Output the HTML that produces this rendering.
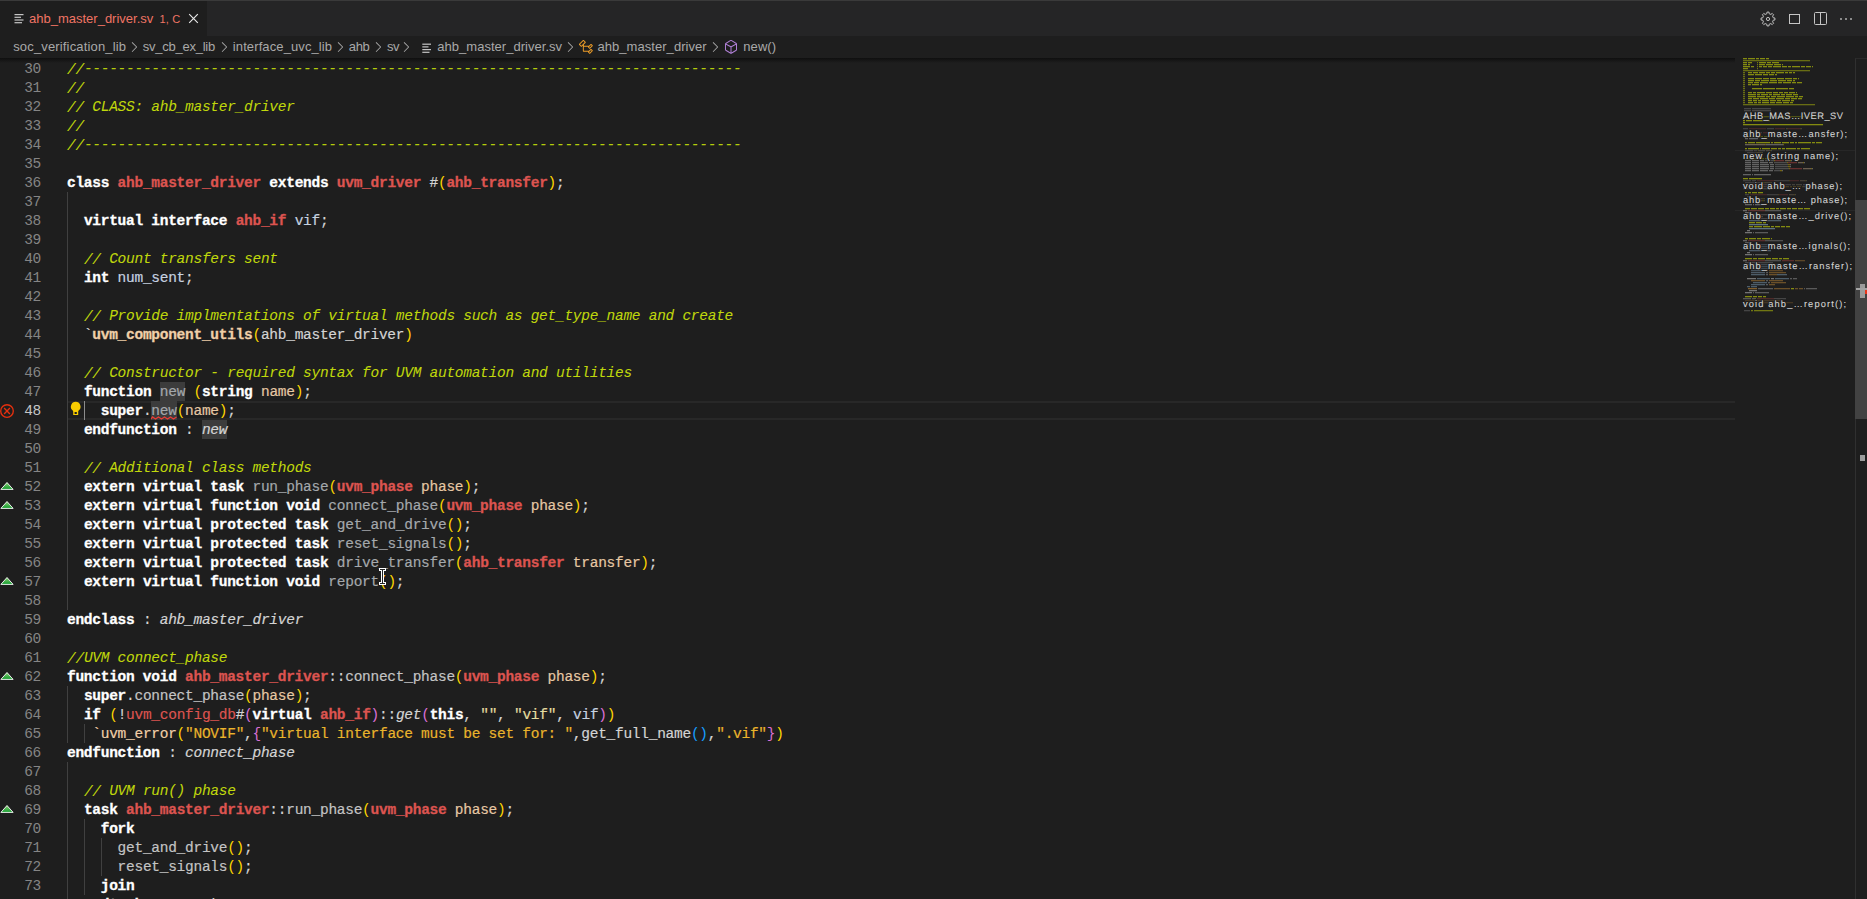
<!DOCTYPE html>
<html><head><meta charset="utf-8"><title>ahb_master_driver.sv</title>
<style>
*{box-sizing:border-box;margin:0;padding:0}
html,body{width:1867px;height:899px;overflow:hidden;background:#1e1e1e}
body{position:relative;font-family:"Liberation Sans",sans-serif;color:#d4d4d4}
.abs{position:absolute}
/* tab bar */
#tabs{position:absolute;left:0;top:0;width:1867px;height:36px;background:#252526}
#topline{position:absolute;left:0;top:0;width:1867px;height:1px;background:#3a3a3a}
#tab{position:absolute;left:0;top:1px;width:207px;height:35px;background:#1e1e1e}
#tab .lbl{position:absolute;left:29px;top:10px;font-size:13px;line-height:16px;color:#f07464;white-space:nowrap}
#tab .badge{position:absolute;left:159.5px;top:9.5px;letter-spacing:0.2px;font-size:11px;line-height:16px;color:#f07464;white-space:nowrap}
/* breadcrumbs */
#bc{position:absolute;left:0;top:36px;width:1867px;height:22px;background:#1e1e1e}
#bc span{position:absolute;top:3px;font-size:13px;line-height:16px;color:#a9a9a9;white-space:nowrap}
#bc svg{position:absolute}
#shadow{position:absolute;left:0;top:58px;width:1735px;height:5px;background:linear-gradient(#000 0,rgba(0,0,0,0) 100%);opacity:.5}
/* editor */
.ln{position:absolute;left:0;width:41px;height:19px;padding-top:1px;text-align:right;font-family:"Liberation Mono",monospace;font-size:14.5px;line-height:19px;color:#858585;letter-spacing:-0.27px;white-space:pre}
.ln.act{color:#c6c6c6}
.cl{position:absolute;left:67px;height:19px;padding-top:1px;font-family:"Liberation Mono",monospace;font-size:14.5px;line-height:19px;letter-spacing:-0.2713px;white-space:pre;color:#d4d4d4;-webkit-text-stroke:0.18px currentColor}
.k{color:#fff;font-weight:bold;-webkit-text-stroke:0.3px #fff}
.t{color:#dc5450;font-weight:bold;-webkit-text-stroke:0.3px #dc5450}
.tr{color:#dc5450}
.c{color:#c0d80c;font-style:italic;-webkit-text-stroke:0.06px #c0d80c}
.cs{display:inline-block;transform:translateY(1px)}
.cd{-webkit-text-stroke:0 !important;color:#b4cc0c}
.d{color:#d4d4d4}
.f{color:#a4a8ac}
.f2{color:#c4c4c4}
.p{color:#e6c8a4}
.m{color:#f0cfa8;font-weight:bold;-webkit-text-stroke:0.3px #f0cfa8}
.mr{color:#f0cfa8}
.s{color:#eab42c}
.s2{color:#e4dca0}
.i{color:#d4d4d4;font-style:italic}
.v{color:#c6d2e0}
.b1{color:#ffd700;-webkit-text-stroke:0}.b2{color:#da70d6;-webkit-text-stroke:0}.b3{color:#179fff;-webkit-text-stroke:0}
.hl{background:#3c3c3c;display:inline-block;height:19px;line-height:19px;margin-top:-1px;padding-top:1px;vertical-align:top}
.ig{position:absolute;width:1px;background:#404040}
#curline{position:absolute;left:67px;top:401px;width:1668px;height:19px;border-top:2px solid #282828;border-bottom:2px solid #282828}
#cursor{position:absolute;left:84px;top:401px;width:1px;height:19px;background:#8c8c8c}
.mm{position:absolute;left:1735px;top:58px}
#sb{position:absolute;left:1855px;top:58px;width:12px;height:841px;border-left:1px solid #303030;border-top:1px solid #2a2a2a}
#slider{position:absolute;left:1855px;top:200px;width:12px;height:219px;background:#424242}
</style></head><body>
<div id="tabs"></div>
<div id="tab">
<svg class="abs" style="left:14px;top:12px" width="10" height="11" viewBox="0 0 10 11"><g fill="#c5c5c5"><rect x="0.5" y="1" width="9" height="1.2"/><rect x="0.5" y="3.7" width="6.5" height="1.2"/><rect x="0.5" y="6.4" width="9" height="1.2"/><rect x="0.5" y="9.1" width="7.5" height="1.2"/></g></svg>
<span class="lbl" id="tl">ahb_master_driver.sv</span><span class="badge" id="tb">1, C</span>
<svg class="abs" style="left:188.3px;top:12.3px" width="11" height="11" viewBox="0 0 11 11"><path d="M1.2 1.2 L9.8 9.8 M9.8 1.2 L1.2 9.8" stroke="#e8e8e8" stroke-width="1.15" fill="none"/></svg>
</div>
<div id="topline"></div>
<!-- tab actions -->
<svg class="abs" style="left:1760.2px;top:10.9px" width="16" height="16" viewBox="0 0 16 16"><g fill="none" stroke="#c5c5c5" stroke-width="0.95"><circle cx="8" cy="8" r="1.6"/><path d="M6.86 2.72 L6.96 1.08 L9.04 1.08 L9.14 2.72 L10.93 3.46 L12.16 2.37 L13.63 3.84 L12.54 5.07 L13.28 6.86 L14.92 6.96 L14.92 9.04 L13.28 9.14 L12.54 10.93 L13.63 12.16 L12.16 13.63 L10.93 12.54 L9.14 13.28 L9.04 14.92 L6.96 14.92 L6.86 13.28 L5.07 12.54 L3.84 13.63 L2.37 12.16 L3.46 10.93 L2.72 9.14 L1.08 9.04 L1.08 6.96 L2.72 6.86 L3.46 5.07 L2.37 3.84 L3.84 2.37 L5.07 3.46Z" stroke-linejoin="round"/></g></svg>
<svg class="abs" style="left:1788px;top:13px" width="13" height="13" viewBox="0 0 13 13"><rect x="1.5" y="1.5" width="10" height="9" fill="none" stroke="#c5c5c5" stroke-width="1"/></svg>
<svg class="abs" style="left:1813px;top:11px" width="16" height="16" viewBox="0 0 16 16"><g fill="none" stroke="#c5c5c5" stroke-width="1"><rect x="1.5" y="1.5" width="12" height="12" rx="1"/><path d="M7.5 1.5v12"/></g></svg>
<svg class="abs" style="left:1839px;top:17px" width="14" height="4" viewBox="0 0 14 4"><g fill="#c5c5c5"><rect x="1.2" y="1.2" width="1.6" height="1.6"/><rect x="6.2" y="1.2" width="1.6" height="1.6"/><rect x="11.2" y="1.2" width="1.6" height="1.6"/></g></svg>

<div id="bc">
<span style="left:13.2px;letter-spacing:0.156px">soc_verification_lib</span>
<span style="left:142.8px;letter-spacing:-0.251px">sv_cb_ex_lib</span>
<span style="left:232.8px;letter-spacing:0.109px">interface_uvc_lib</span>
<span style="left:348.8px;letter-spacing:-0.350px">ahb</span>
<span style="left:387.1px;letter-spacing:-0.700px">sv</span>
<span style="left:437.3px;letter-spacing:0.027px">ahb_master_driver.sv</span>
<span style="left:597.4px;letter-spacing:0.057px">ahb_master_driver</span>
<span style="left:743.3px;letter-spacing:0.071px">new()</span>
<svg style="left:125.9px;top:3px" width="16" height="16" viewBox="0 0 16 16"><path fill="#a9a9a9" d="M10.072 8.024L5.715 3.667l.618-.62L11 7.716v.618L6.333 13l-.618-.619 4.357-4.357z"/></svg>
<svg style="left:216.3px;top:3px" width="16" height="16" viewBox="0 0 16 16"><path fill="#a9a9a9" d="M10.072 8.024L5.715 3.667l.618-.62L11 7.716v.618L6.333 13l-.618-.619 4.357-4.357z"/></svg>
<svg style="left:332.0px;top:3px" width="16" height="16" viewBox="0 0 16 16"><path fill="#a9a9a9" d="M10.072 8.024L5.715 3.667l.618-.62L11 7.716v.618L6.333 13l-.618-.619 4.357-4.357z"/></svg>
<svg style="left:370.3px;top:3px" width="16" height="16" viewBox="0 0 16 16"><path fill="#a9a9a9" d="M10.072 8.024L5.715 3.667l.618-.62L11 7.716v.618L6.333 13l-.618-.619 4.357-4.357z"/></svg>
<svg style="left:398.1px;top:3px" width="16" height="16" viewBox="0 0 16 16"><path fill="#a9a9a9" d="M10.072 8.024L5.715 3.667l.618-.62L11 7.716v.618L6.333 13l-.618-.619 4.357-4.357z"/></svg>
<svg style="left:562.2px;top:3px" width="16" height="16" viewBox="0 0 16 16"><path fill="#a9a9a9" d="M10.072 8.024L5.715 3.667l.618-.62L11 7.716v.618L6.333 13l-.618-.619 4.357-4.357z"/></svg>
<svg style="left:706.8px;top:3px" width="16" height="16" viewBox="0 0 16 16"><path fill="#a9a9a9" d="M10.072 8.024L5.715 3.667l.618-.62L11 7.716v.618L6.333 13l-.618-.619 4.357-4.357z"/></svg>
<svg style="left:422px;top:7px" width="10" height="11" viewBox="0 0 10 11"><g fill="#c5c5c5"><rect x="0.3" y="0.6" width="8.7" height="1.2"/><rect x="0.3" y="3.3" width="6.2" height="1.2"/><rect x="0.3" y="6" width="8.7" height="1.2"/><rect x="0.3" y="8.7" width="7.2" height="1.2"/></g></svg>
<svg style="left:578px;top:3px" width="16" height="16" viewBox="0 0 16 16"><path fill="#ee9d28" d="M11.34 9.71h.71l2.67-2.67v-.71L13.38 5h-.7l-1.82 1.81h-5V5.56l1.86-1.85V3l-2-2H5L1 5v.71l2 2h.71l1.14-1.15v5.79l.5.5H10v.52l1.33 1.34h.71l2.67-2.67v-.71L13.37 10h-.7l-1.86 1.85h-5v-4H10v.48l1.34 1.38zm1.69-3.65l.63.63-2 2-.63-.63 2-2zm0 5l.63.63-2 2-.63-.63 2-2zM3.35 6.65l-1.29-1.3 3.29-3.29 1.3 1.29-3.3 3.3z"/></svg>
<svg style="left:723px;top:3px" width="16" height="16" viewBox="0 0 16 16"><path fill="#b180d7" d="M13.51 4l-5-3h-1l-5 3-.49.86v6l.49.85 5 3h1l5-3 .49-.85v-6L13.51 4zm-6 9.56l-4.5-2.7V5.7l4.5 2.45v5.41zM3.27 4.7l4.74-2.84 4.74 2.84-4.74 2.59L3.27 4.7zm9.74 6.16l-4.5 2.7V8.15l4.5-2.45v5.16z"/></svg>
</div>

<div id="curline"></div>
<!-- indent guides -->
<div class="ig" style="left:67px;top:192px;height:418px;background:#404040"></div>
<div class="ig" style="left:67px;top:686px;height:57px;background:#404040"></div>
<div class="ig" style="left:67px;top:762px;height:171px;background:#404040"></div>
<div class="ig" style="left:84px;top:724px;height:19px;background:#404040"></div>
<div class="ig" style="left:84px;top:819px;height:76px;background:#404040"></div>
<div class="ig" style="left:101px;top:838px;height:38px;background:#404040"></div>
<div class="ln" style="top:59px">30</div>
<div class="cl" style="top:59px"><span class="c cs">//</span><span class="c cd">------------------------------------------------------------------------------</span></div>
<div class="ln" style="top:78px">31</div>
<div class="cl" style="top:78px"><span class="c cs">//</span></div>
<div class="ln" style="top:97px">32</div>
<div class="cl" style="top:97px"><span class="c cs">//</span><span class="c"> CLASS: ahb_master_driver</span></div>
<div class="ln" style="top:116px">33</div>
<div class="cl" style="top:116px"><span class="c cs">//</span></div>
<div class="ln" style="top:135px">34</div>
<div class="cl" style="top:135px"><span class="c cs">//</span><span class="c cd">------------------------------------------------------------------------------</span></div>
<div class="ln" style="top:154px">35</div>
<div class="ln" style="top:173px">36</div>
<div class="cl" style="top:173px"><span class="k">class</span><span class="d"> </span><span class="t">ahb_master_driver</span><span class="d"> </span><span class="k">extends</span><span class="d"> </span><span class="t">uvm_driver</span><span class="d"> #</span><span class="b1">(</span><span class="t">ahb_transfer</span><span class="b1">)</span><span class="d">;</span></div>
<div class="ln" style="top:192px">37</div>
<div class="ln" style="top:211px">38</div>
<div class="cl" style="top:211px"><span class="d">  </span><span class="k">virtual interface</span><span class="d"> </span><span class="t">ahb_if</span><span class="v"> vif</span><span class="d">;</span></div>
<div class="ln" style="top:230px">39</div>
<div class="ln" style="top:249px">40</div>
<div class="cl" style="top:249px"><span class="d">  </span><span class="c cs">//</span><span class="c"> Count transfers sent</span></div>
<div class="ln" style="top:268px">41</div>
<div class="cl" style="top:268px"><span class="d">  </span><span class="k">int</span><span class="v"> num_sent</span><span class="d">;</span></div>
<div class="ln" style="top:287px">42</div>
<div class="ln" style="top:306px">43</div>
<div class="cl" style="top:306px"><span class="d">  </span><span class="c cs">//</span><span class="c"> Provide implmentations of virtual methods such as get_type_name and create</span></div>
<div class="ln" style="top:325px">44</div>
<div class="cl" style="top:325px"><span class="d">  `</span><span class="m">uvm_component_utils</span><span class="b1">(</span><span class="d">ahb_master_driver</span><span class="b1">)</span></div>
<div class="ln" style="top:344px">45</div>
<div class="ln" style="top:363px">46</div>
<div class="cl" style="top:363px"><span class="d">  </span><span class="c cs">//</span><span class="c"> Constructor - required syntax for UVM automation and utilities</span></div>
<div class="ln" style="top:382px">47</div>
<div class="cl" style="top:382px"><span class="d">  </span><span class="k">function</span><span class="d"> </span><span class="f hl">new</span><span class="d"> </span><span class="b1">(</span><span class="k">string</span><span class="p"> name</span><span class="b1">)</span><span class="d">;</span></div>
<div class="ln act" style="top:401px">48</div>
<div class="cl" style="top:401px"><span class="d">    </span><span class="k">super</span><span class="d">.</span><span class="f hl sq">new</span><span class="b1">(</span><span class="p">name</span><span class="b1">)</span><span class="d">;</span></div>
<div class="ln" style="top:420px">49</div>
<div class="cl" style="top:420px"><span class="d">  </span><span class="k">endfunction</span><span class="d"> : </span><span class="i hl">new</span></div>
<div class="ln" style="top:439px">50</div>
<div class="ln" style="top:458px">51</div>
<div class="cl" style="top:458px"><span class="d">  </span><span class="c cs">//</span><span class="c"> Additional class methods</span></div>
<div class="ln" style="top:477px">52</div>
<div class="cl" style="top:477px"><span class="d">  </span><span class="k">extern virtual task</span><span class="d"> </span><span class="f">run_phase</span><span class="b1">(</span><span class="t">uvm_phase</span><span class="p"> phase</span><span class="b1">)</span><span class="d">;</span></div>
<div class="ln" style="top:496px">53</div>
<div class="cl" style="top:496px"><span class="d">  </span><span class="k">extern virtual function void</span><span class="d"> </span><span class="f">connect_phase</span><span class="b1">(</span><span class="t">uvm_phase</span><span class="p"> phase</span><span class="b1">)</span><span class="d">;</span></div>
<div class="ln" style="top:515px">54</div>
<div class="cl" style="top:515px"><span class="d">  </span><span class="k">extern virtual protected task</span><span class="d"> </span><span class="f">get_and_drive</span><span class="b1">()</span><span class="d">;</span></div>
<div class="ln" style="top:534px">55</div>
<div class="cl" style="top:534px"><span class="d">  </span><span class="k">extern virtual protected task</span><span class="d"> </span><span class="f">reset_signals</span><span class="b1">()</span><span class="d">;</span></div>
<div class="ln" style="top:553px">56</div>
<div class="cl" style="top:553px"><span class="d">  </span><span class="k">extern virtual protected task</span><span class="d"> </span><span class="f">drive_transfer</span><span class="b1">(</span><span class="t">ahb_transfer</span><span class="p"> transfer</span><span class="b1">)</span><span class="d">;</span></div>
<div class="ln" style="top:572px">57</div>
<div class="cl" style="top:572px"><span class="d">  </span><span class="k">extern virtual function void</span><span class="d"> </span><span class="f">report</span><span class="b1">()</span><span class="d">;</span></div>
<div class="ln" style="top:591px">58</div>
<div class="ln" style="top:610px">59</div>
<div class="cl" style="top:610px"><span class="k">endclass</span><span class="d"> : </span><span class="i">ahb_master_driver</span></div>
<div class="ln" style="top:629px">60</div>
<div class="ln" style="top:648px">61</div>
<div class="cl" style="top:648px"><span class="c cs">//</span><span class="c">UVM connect_phase</span></div>
<div class="ln" style="top:667px">62</div>
<div class="cl" style="top:667px"><span class="k">function void</span><span class="d"> </span><span class="t">ahb_master_driver</span><span class="d">::</span><span class="f2">connect_phase</span><span class="b1">(</span><span class="t">uvm_phase</span><span class="p"> phase</span><span class="b1">)</span><span class="d">;</span></div>
<div class="ln" style="top:686px">63</div>
<div class="cl" style="top:686px"><span class="d">  </span><span class="k">super</span><span class="d">.</span><span class="f2">connect_phase</span><span class="b1">(</span><span class="p">phase</span><span class="b1">)</span><span class="d">;</span></div>
<div class="ln" style="top:705px">64</div>
<div class="cl" style="top:705px"><span class="d">  </span><span class="k">if</span><span class="d"> </span><span class="b1">(</span><span class="d">!</span><span class="tr">uvm_config_db</span><span class="d">#</span><span class="b2">(</span><span class="k">virtual</span><span class="d"> </span><span class="t">ahb_if</span><span class="b2">)</span><span class="d">::</span><span class="i">get</span><span class="b2">(</span><span class="k">this</span><span class="d">, </span><span class="s2">&quot;&quot;</span><span class="d">, </span><span class="s2">&quot;vif&quot;</span><span class="d">, </span><span class="v">vif</span><span class="b2">)</span><span class="b1">)</span></div>
<div class="ln" style="top:724px">65</div>
<div class="cl" style="top:724px"><span class="d">   </span><span class="mr">`uvm_error</span><span class="b1">(</span><span class="s">&quot;NOVIF&quot;</span><span class="d">,</span><span class="b2">{</span><span class="s">&quot;virtual interface must be set for: &quot;</span><span class="d">,get_full_name</span><span class="b3">()</span><span class="d">,</span><span class="s">&quot;.vif&quot;</span><span class="b2">}</span><span class="b1">)</span></div>
<div class="ln" style="top:743px">66</div>
<div class="cl" style="top:743px"><span class="k">endfunction</span><span class="d"> : </span><span class="i">connect_phase</span></div>
<div class="ln" style="top:762px">67</div>
<div class="ln" style="top:781px">68</div>
<div class="cl" style="top:781px"><span class="d">  </span><span class="c cs">//</span><span class="c"> UVM run() phase</span></div>
<div class="ln" style="top:800px">69</div>
<div class="cl" style="top:800px"><span class="d">  </span><span class="k">task</span><span class="d"> </span><span class="t">ahb_master_driver</span><span class="d">::</span><span class="f2">run_phase</span><span class="b1">(</span><span class="t">uvm_phase</span><span class="p"> phase</span><span class="b1">)</span><span class="d">;</span></div>
<div class="ln" style="top:819px">70</div>
<div class="cl" style="top:819px"><span class="d">    </span><span class="k">fork</span></div>
<div class="ln" style="top:838px">71</div>
<div class="cl" style="top:838px"><span class="d">      </span><span class="f2">get_and_drive</span><span class="b1">()</span><span class="d">;</span></div>
<div class="ln" style="top:857px">72</div>
<div class="cl" style="top:857px"><span class="d">      </span><span class="f2">reset_signals</span><span class="b1">()</span><span class="d">;</span></div>
<div class="ln" style="top:876px">73</div>
<div class="cl" style="top:876px"><span class="d">    </span><span class="k">join</span></div>
<div class="ln" style="top:895px">74</div>
<div class="cl" style="top:895px"><span class="d">  </span><span class="k">endtask</span><span class="d"> : </span><span class="i">run_phase</span></div>
<div id="cursor"></div>
<svg class="abs" style="left:0;top:403px" width="15" height="16" viewBox="0 0 15 16"><g fill="none" stroke="#e5300e" stroke-width="1.35"><circle cx="7" cy="8" r="6.3"/><path d="M4.1 5.1l5.8 5.8M9.9 5.1l-5.8 5.8"/></g></svg>
<svg class="abs" style="left:0;top:477px" width="15" height="19" viewBox="0 0 15 19"><defs><linearGradient id="tg52" x1="0" y1="0" x2="0" y2="1"><stop offset="0" stop-color="#8fd27a"/><stop offset="1" stop-color="#0c9a2a"/></linearGradient></defs><path d="M7 5.5L13.1 12.4H0.9z" fill="url(#tg52)" stroke="#ffffff" stroke-width="0.9" stroke-linejoin="miter"/></svg>
<svg class="abs" style="left:0;top:496px" width="15" height="19" viewBox="0 0 15 19"><defs><linearGradient id="tg53" x1="0" y1="0" x2="0" y2="1"><stop offset="0" stop-color="#8fd27a"/><stop offset="1" stop-color="#0c9a2a"/></linearGradient></defs><path d="M7 5.5L13.1 12.4H0.9z" fill="url(#tg53)" stroke="#ffffff" stroke-width="0.9" stroke-linejoin="miter"/></svg>
<svg class="abs" style="left:0;top:572px" width="15" height="19" viewBox="0 0 15 19"><defs><linearGradient id="tg57" x1="0" y1="0" x2="0" y2="1"><stop offset="0" stop-color="#8fd27a"/><stop offset="1" stop-color="#0c9a2a"/></linearGradient></defs><path d="M7 5.5L13.1 12.4H0.9z" fill="url(#tg57)" stroke="#ffffff" stroke-width="0.9" stroke-linejoin="miter"/></svg>
<svg class="abs" style="left:0;top:667px" width="15" height="19" viewBox="0 0 15 19"><defs><linearGradient id="tg62" x1="0" y1="0" x2="0" y2="1"><stop offset="0" stop-color="#8fd27a"/><stop offset="1" stop-color="#0c9a2a"/></linearGradient></defs><path d="M7 5.5L13.1 12.4H0.9z" fill="url(#tg62)" stroke="#ffffff" stroke-width="0.9" stroke-linejoin="miter"/></svg>
<svg class="abs" style="left:0;top:800px" width="15" height="19" viewBox="0 0 15 19"><defs><linearGradient id="tg69" x1="0" y1="0" x2="0" y2="1"><stop offset="0" stop-color="#8fd27a"/><stop offset="1" stop-color="#0c9a2a"/></linearGradient></defs><path d="M7 5.5L13.1 12.4H0.9z" fill="url(#tg69)" stroke="#ffffff" stroke-width="0.9" stroke-linejoin="miter"/></svg>
<svg class="abs" style="left:69px;top:401px" width="14" height="16" viewBox="0 0 14 16"><path fill="#f8cc00" d="M6.7 0.8a4.8 4.8 0 0 0-3.2 8.4c.5.5.7.9.7 1.5V14h5v-3.3c0-.6.2-1 .7-1.5A4.8 4.8 0 0 0 6.7.8z"/><rect x="5.6" y="11" width="2.2" height="2" fill="#1e1e1e"/></svg>
<div id="shadow"></div>
<svg class="mm" width="120" height="841" viewBox="0 0 120 841">
<defs><pattern id="mst" width="4" height="2" patternUnits="userSpaceOnUse"><rect width="4" height="1" fill="#fff"/><rect y="1" width="4" height="1" fill="#4a4a4a"/></pattern><mask id="mmk"><rect width="120" height="841" fill="url(#mst)"/></mask></defs>
<g shape-rendering="crispEdges" mask="url(#mmk)">
<rect x="8" y="0" width="4" height="2" fill="#c4cf08" opacity="0.62"/>
<rect x="13" y="0" width="7" height="2" fill="#c4cf08" opacity="0.62"/>
<rect x="21" y="0" width="3" height="2" fill="#c4cf08" opacity="0.62"/>
<rect x="25" y="0" width="5" height="2" fill="#c4cf08" opacity="0.62"/>
<rect x="31" y="0" width="3" height="2" fill="#c4cf08" opacity="0.62"/>
<rect x="8" y="2" width="67" height="2" fill="#c4cf08" opacity="0.45"/>
<rect x="8" y="4" width="4" height="2" fill="#c4cf08" opacity="0.62"/>
<rect x="13" y="4" width="4" height="2" fill="#c4cf08" opacity="0.62"/>
<rect x="22" y="4" width="1" height="2" fill="#c4cf08" opacity="0.50"/>
<rect x="24" y="4" width="7" height="2" fill="#c4cf08" opacity="0.62"/>
<rect x="32" y="4" width="4" height="2" fill="#c4cf08" opacity="0.62"/>
<rect x="37" y="4" width="7" height="2" fill="#c4cf08" opacity="0.62"/>
<rect x="8" y="6" width="4" height="2" fill="#c4cf08" opacity="0.62"/>
<rect x="13" y="6" width="2" height="2" fill="#c4cf08" opacity="0.62"/>
<rect x="22" y="6" width="1" height="2" fill="#c4cf08" opacity="0.50"/>
<rect x="24" y="6" width="6" height="2" fill="#c4cf08" opacity="0.62"/>
<rect x="31" y="6" width="7" height="2" fill="#c4cf08" opacity="0.62"/>
<rect x="39" y="6" width="7" height="2" fill="#c4cf08" opacity="0.62"/>
<rect x="47" y="6" width="1" height="2" fill="#c4cf08" opacity="0.62"/>
<rect x="8" y="8" width="7" height="2" fill="#c4cf08" opacity="0.62"/>
<rect x="16" y="8" width="3" height="2" fill="#c4cf08" opacity="0.62"/>
<rect x="22" y="8" width="1" height="2" fill="#c4cf08" opacity="0.50"/>
<rect x="24" y="8" width="3" height="2" fill="#c4cf08" opacity="0.62"/>
<rect x="28" y="8" width="4" height="2" fill="#c4cf08" opacity="0.62"/>
<rect x="33" y="8" width="4" height="2" fill="#c4cf08" opacity="0.62"/>
<rect x="38" y="8" width="8" height="2" fill="#c4cf08" opacity="0.62"/>
<rect x="47" y="8" width="5" height="2" fill="#c4cf08" opacity="0.62"/>
<rect x="53" y="8" width="3" height="2" fill="#c4cf08" opacity="0.62"/>
<rect x="57" y="8" width="8" height="2" fill="#c4cf08" opacity="0.62"/>
<rect x="66" y="8" width="4" height="2" fill="#c4cf08" opacity="0.62"/>
<rect x="71" y="8" width="5" height="2" fill="#c4cf08" opacity="0.62"/>
<rect x="77" y="8" width="1" height="2" fill="#c4cf08" opacity="0.62"/>
<rect x="8" y="10" width="5" height="2" fill="#c4cf08" opacity="0.62"/>
<rect x="22" y="10" width="1" height="2" fill="#c4cf08" opacity="0.50"/>
<rect x="8" y="12" width="67" height="2" fill="#c4cf08" opacity="0.45"/>
<rect x="8" y="14" width="2" height="2" fill="#c4cf08" opacity="0.45"/>
<rect x="13" y="14" width="4" height="2" fill="#c4cf08" opacity="0.62"/>
<rect x="18" y="14" width="5" height="2" fill="#c4cf08" opacity="0.62"/>
<rect x="24" y="14" width="6" height="2" fill="#c4cf08" opacity="0.62"/>
<rect x="31" y="14" width="4" height="2" fill="#c4cf08" opacity="0.62"/>
<rect x="36" y="14" width="4" height="2" fill="#c4cf08" opacity="0.62"/>
<rect x="41" y="14" width="8" height="2" fill="#c4cf08" opacity="0.62"/>
<rect x="50" y="14" width="3" height="2" fill="#c4cf08" opacity="0.62"/>
<rect x="54" y="14" width="3" height="2" fill="#c4cf08" opacity="0.62"/>
<rect x="58" y="14" width="2" height="2" fill="#c4cf08" opacity="0.62"/>
<rect x="8" y="16" width="2" height="2" fill="#c4cf08" opacity="0.45"/>
<rect x="13" y="16" width="6" height="2" fill="#c4cf08" opacity="0.62"/>
<rect x="20" y="16" width="7" height="2" fill="#c4cf08" opacity="0.62"/>
<rect x="28" y="16" width="5" height="2" fill="#c4cf08" opacity="0.62"/>
<rect x="34" y="16" width="5" height="2" fill="#c4cf08" opacity="0.62"/>
<rect x="40" y="16" width="2" height="2" fill="#c4cf08" opacity="0.62"/>
<rect x="8" y="18" width="2" height="2" fill="#c4cf08" opacity="0.45"/>
<rect x="8" y="20" width="2" height="2" fill="#c4cf08" opacity="0.45"/>
<rect x="13" y="20" width="6" height="2" fill="#c4cf08" opacity="0.62"/>
<rect x="20" y="20" width="7" height="2" fill="#c4cf08" opacity="0.62"/>
<rect x="28" y="20" width="6" height="2" fill="#c4cf08" opacity="0.62"/>
<rect x="35" y="20" width="6" height="2" fill="#c4cf08" opacity="0.62"/>
<rect x="42" y="20" width="7" height="2" fill="#c4cf08" opacity="0.62"/>
<rect x="50" y="20" width="7" height="2" fill="#c4cf08" opacity="0.62"/>
<rect x="58" y="20" width="4" height="2" fill="#c4cf08" opacity="0.62"/>
<rect x="63" y="20" width="1" height="2" fill="#c4cf08" opacity="0.62"/>
<rect x="8" y="22" width="2" height="2" fill="#c4cf08" opacity="0.45"/>
<rect x="13" y="22" width="6" height="2" fill="#c4cf08" opacity="0.62"/>
<rect x="20" y="22" width="5" height="2" fill="#c4cf08" opacity="0.62"/>
<rect x="26" y="22" width="8" height="2" fill="#c4cf08" opacity="0.62"/>
<rect x="35" y="22" width="7" height="2" fill="#c4cf08" opacity="0.62"/>
<rect x="43" y="22" width="8" height="2" fill="#c4cf08" opacity="0.62"/>
<rect x="52" y="22" width="5" height="2" fill="#c4cf08" opacity="0.62"/>
<rect x="58" y="22" width="2" height="2" fill="#c4cf08" opacity="0.62"/>
<rect x="8" y="24" width="2" height="2" fill="#c4cf08" opacity="0.45"/>
<rect x="13" y="24" width="5" height="2" fill="#c4cf08" opacity="0.62"/>
<rect x="19" y="24" width="5" height="2" fill="#c4cf08" opacity="0.62"/>
<rect x="25" y="24" width="8" height="2" fill="#c4cf08" opacity="0.62"/>
<rect x="34" y="24" width="8" height="2" fill="#c4cf08" opacity="0.62"/>
<rect x="43" y="24" width="4" height="2" fill="#c4cf08" opacity="0.62"/>
<rect x="48" y="24" width="8" height="2" fill="#c4cf08" opacity="0.62"/>
<rect x="57" y="24" width="4" height="2" fill="#c4cf08" opacity="0.62"/>
<rect x="62" y="24" width="5" height="2" fill="#c4cf08" opacity="0.62"/>
<rect x="8" y="26" width="2" height="2" fill="#c4cf08" opacity="0.45"/>
<rect x="13" y="26" width="3" height="2" fill="#c4cf08" opacity="0.62"/>
<rect x="17" y="26" width="7" height="2" fill="#c4cf08" opacity="0.62"/>
<rect x="25" y="26" width="2" height="2" fill="#c4cf08" opacity="0.62"/>
<rect x="8" y="28" width="2" height="2" fill="#c4cf08" opacity="0.45"/>
<rect x="8" y="30" width="2" height="2" fill="#c4cf08" opacity="0.45"/>
<rect x="17" y="30" width="10" height="2" fill="#c4cf08" opacity="0.62"/>
<rect x="28" y="30" width="12" height="2" fill="#c4cf08" opacity="0.62"/>
<rect x="41" y="30" width="12" height="2" fill="#c4cf08" opacity="0.62"/>
<rect x="54" y="30" width="5" height="2" fill="#c4cf08" opacity="0.62"/>
<rect x="8" y="32" width="2" height="2" fill="#c4cf08" opacity="0.45"/>
<rect x="8" y="34" width="2" height="2" fill="#c4cf08" opacity="0.45"/>
<rect x="13" y="34" width="4" height="2" fill="#c4cf08" opacity="0.62"/>
<rect x="18" y="34" width="3" height="2" fill="#c4cf08" opacity="0.62"/>
<rect x="22" y="34" width="8" height="2" fill="#c4cf08" opacity="0.62"/>
<rect x="31" y="34" width="6" height="2" fill="#c4cf08" opacity="0.62"/>
<rect x="38" y="34" width="5" height="2" fill="#c4cf08" opacity="0.62"/>
<rect x="44" y="34" width="4" height="2" fill="#c4cf08" opacity="0.62"/>
<rect x="49" y="34" width="4" height="2" fill="#c4cf08" opacity="0.62"/>
<rect x="54" y="34" width="6" height="2" fill="#c4cf08" opacity="0.62"/>
<rect x="61" y="34" width="1" height="2" fill="#c4cf08" opacity="0.62"/>
<rect x="8" y="36" width="2" height="2" fill="#c4cf08" opacity="0.45"/>
<rect x="13" y="36" width="8" height="2" fill="#c4cf08" opacity="0.62"/>
<rect x="22" y="36" width="3" height="2" fill="#c4cf08" opacity="0.62"/>
<rect x="26" y="36" width="7" height="2" fill="#c4cf08" opacity="0.62"/>
<rect x="34" y="36" width="3" height="2" fill="#c4cf08" opacity="0.62"/>
<rect x="38" y="36" width="7" height="2" fill="#c4cf08" opacity="0.62"/>
<rect x="46" y="36" width="4" height="2" fill="#c4cf08" opacity="0.62"/>
<rect x="51" y="36" width="6" height="2" fill="#c4cf08" opacity="0.62"/>
<rect x="58" y="36" width="5" height="2" fill="#c4cf08" opacity="0.62"/>
<rect x="8" y="38" width="2" height="2" fill="#c4cf08" opacity="0.45"/>
<rect x="13" y="38" width="8" height="2" fill="#c4cf08" opacity="0.62"/>
<rect x="22" y="38" width="8" height="2" fill="#c4cf08" opacity="0.62"/>
<rect x="31" y="38" width="4" height="2" fill="#c4cf08" opacity="0.62"/>
<rect x="36" y="38" width="5" height="2" fill="#c4cf08" opacity="0.62"/>
<rect x="42" y="38" width="8" height="2" fill="#c4cf08" opacity="0.62"/>
<rect x="51" y="38" width="8" height="2" fill="#c4cf08" opacity="0.62"/>
<rect x="60" y="38" width="3" height="2" fill="#c4cf08" opacity="0.62"/>
<rect x="64" y="38" width="4" height="2" fill="#c4cf08" opacity="0.62"/>
<rect x="8" y="40" width="2" height="2" fill="#c4cf08" opacity="0.45"/>
<rect x="13" y="40" width="4" height="2" fill="#c4cf08" opacity="0.62"/>
<rect x="18" y="40" width="6" height="2" fill="#c4cf08" opacity="0.62"/>
<rect x="25" y="40" width="8" height="2" fill="#c4cf08" opacity="0.62"/>
<rect x="34" y="40" width="6" height="2" fill="#c4cf08" opacity="0.62"/>
<rect x="41" y="40" width="8" height="2" fill="#c4cf08" opacity="0.62"/>
<rect x="50" y="40" width="5" height="2" fill="#c4cf08" opacity="0.62"/>
<rect x="56" y="40" width="6" height="2" fill="#c4cf08" opacity="0.62"/>
<rect x="63" y="40" width="4" height="2" fill="#c4cf08" opacity="0.62"/>
<rect x="8" y="42" width="2" height="2" fill="#c4cf08" opacity="0.45"/>
<rect x="13" y="42" width="4" height="2" fill="#c4cf08" opacity="0.62"/>
<rect x="18" y="42" width="4" height="2" fill="#c4cf08" opacity="0.62"/>
<rect x="23" y="42" width="3" height="2" fill="#c4cf08" opacity="0.62"/>
<rect x="27" y="42" width="7" height="2" fill="#c4cf08" opacity="0.62"/>
<rect x="35" y="42" width="6" height="2" fill="#c4cf08" opacity="0.62"/>
<rect x="42" y="42" width="4" height="2" fill="#c4cf08" opacity="0.62"/>
<rect x="47" y="42" width="8" height="2" fill="#c4cf08" opacity="0.62"/>
<rect x="56" y="42" width="3" height="2" fill="#c4cf08" opacity="0.62"/>
<rect x="8" y="44" width="2" height="2" fill="#c4cf08" opacity="0.45"/>
<rect x="13" y="44" width="5" height="2" fill="#c4cf08" opacity="0.62"/>
<rect x="19" y="44" width="3" height="2" fill="#c4cf08" opacity="0.62"/>
<rect x="23" y="44" width="3" height="2" fill="#c4cf08" opacity="0.62"/>
<rect x="27" y="44" width="7" height="2" fill="#c4cf08" opacity="0.62"/>
<rect x="35" y="44" width="5" height="2" fill="#c4cf08" opacity="0.62"/>
<rect x="41" y="44" width="6" height="2" fill="#c4cf08" opacity="0.62"/>
<rect x="48" y="44" width="6" height="2" fill="#c4cf08" opacity="0.62"/>
<rect x="55" y="44" width="3" height="2" fill="#c4cf08" opacity="0.62"/>
<rect x="8" y="46" width="72" height="2" fill="#c4cf08" opacity="0.45"/>
<rect x="9" y="50" width="7" height="2" fill="#8a8a8a" opacity="0.37"/>
<rect x="17" y="50" width="19" height="2" fill="#8a8a8a" opacity="0.37"/>
<rect x="9" y="52" width="7" height="2" fill="#8a8a8a" opacity="0.37"/>
<rect x="17" y="52" width="19" height="2" fill="#8a8a8a" opacity="0.37"/>
<rect x="8" y="58" width="2" height="2" fill="#c4cf08" opacity="0.30"/>
<rect x="10" y="58" width="78" height="2" fill="#c4cf08" opacity="0.30"/>
<rect x="8" y="60" width="2" height="2" fill="#c4cf08" opacity="0.30"/>
<rect x="8" y="62" width="2" height="2" fill="#c4cf08" opacity="0.62"/>
<rect x="11" y="62" width="6" height="2" fill="#c4cf08" opacity="0.62"/>
<rect x="18" y="62" width="17" height="2" fill="#c4cf08" opacity="0.62"/>
<rect x="8" y="64" width="2" height="2" fill="#c4cf08" opacity="0.62"/>
<rect x="8" y="66" width="2" height="2" fill="#c4cf08" opacity="0.62"/>
<rect x="10" y="66" width="78" height="2" fill="#c4cf08" opacity="0.62"/>
<rect x="8" y="70" width="5" height="2" fill="#ffffff" opacity="0.15"/>
<rect x="14" y="70" width="17" height="2" fill="#e0524f" opacity="0.19"/>
<rect x="32" y="70" width="7" height="2" fill="#ffffff" opacity="0.15"/>
<rect x="40" y="70" width="10" height="2" fill="#e0524f" opacity="0.19"/>
<rect x="51" y="70" width="1" height="2" fill="#cfcfcf" opacity="0.19"/>
<rect x="52" y="70" width="1" height="2" fill="#ffd700" opacity="0.19"/>
<rect x="53" y="70" width="12" height="2" fill="#e0524f" opacity="0.19"/>
<rect x="65" y="70" width="1" height="2" fill="#ffd700" opacity="0.19"/>
<rect x="66" y="70" width="1" height="2" fill="#cfcfcf" opacity="0.19"/>
<rect x="10" y="74" width="7" height="2" fill="#ffffff" opacity="0.15"/>
<rect x="18" y="74" width="9" height="2" fill="#ffffff" opacity="0.15"/>
<rect x="28" y="74" width="6" height="2" fill="#e0524f" opacity="0.19"/>
<rect x="35" y="74" width="3" height="2" fill="#c6d2e0" opacity="0.19"/>
<rect x="38" y="74" width="1" height="2" fill="#cfcfcf" opacity="0.19"/>
<rect x="10" y="78" width="2" height="2" fill="#c4cf08" opacity="0.30"/>
<rect x="13" y="78" width="5" height="2" fill="#c4cf08" opacity="0.30"/>
<rect x="19" y="78" width="9" height="2" fill="#c4cf08" opacity="0.30"/>
<rect x="29" y="78" width="4" height="2" fill="#c4cf08" opacity="0.30"/>
<rect x="10" y="80" width="3" height="2" fill="#ffffff" opacity="0.31"/>
<rect x="14" y="80" width="8" height="2" fill="#c6d2e0" opacity="0.38"/>
<rect x="22" y="80" width="1" height="2" fill="#cfcfcf" opacity="0.38"/>
<rect x="10" y="84" width="2" height="2" fill="#c4cf08" opacity="0.62"/>
<rect x="13" y="84" width="7" height="2" fill="#c4cf08" opacity="0.62"/>
<rect x="21" y="84" width="14" height="2" fill="#c4cf08" opacity="0.62"/>
<rect x="36" y="84" width="2" height="2" fill="#c4cf08" opacity="0.62"/>
<rect x="39" y="84" width="7" height="2" fill="#c4cf08" opacity="0.62"/>
<rect x="47" y="84" width="7" height="2" fill="#c4cf08" opacity="0.62"/>
<rect x="55" y="84" width="4" height="2" fill="#c4cf08" opacity="0.62"/>
<rect x="60" y="84" width="2" height="2" fill="#c4cf08" opacity="0.62"/>
<rect x="63" y="84" width="13" height="2" fill="#c4cf08" opacity="0.62"/>
<rect x="77" y="84" width="3" height="2" fill="#c4cf08" opacity="0.62"/>
<rect x="81" y="84" width="6" height="2" fill="#c4cf08" opacity="0.62"/>
<rect x="10" y="86" width="1" height="2" fill="#cfcfcf" opacity="0.38"/>
<rect x="11" y="86" width="19" height="2" fill="#f0cfa8" opacity="0.38"/>
<rect x="30" y="86" width="1" height="2" fill="#ffd700" opacity="0.38"/>
<rect x="31" y="86" width="17" height="2" fill="#cfcfcf" opacity="0.38"/>
<rect x="48" y="86" width="1" height="2" fill="#ffd700" opacity="0.38"/>
<rect x="10" y="90" width="2" height="2" fill="#c4cf08" opacity="0.62"/>
<rect x="13" y="90" width="11" height="2" fill="#c4cf08" opacity="0.62"/>
<rect x="25" y="90" width="1" height="2" fill="#c4cf08" opacity="0.62"/>
<rect x="27" y="90" width="8" height="2" fill="#c4cf08" opacity="0.62"/>
<rect x="36" y="90" width="6" height="2" fill="#c4cf08" opacity="0.62"/>
<rect x="43" y="90" width="3" height="2" fill="#c4cf08" opacity="0.62"/>
<rect x="47" y="90" width="3" height="2" fill="#c4cf08" opacity="0.62"/>
<rect x="51" y="90" width="10" height="2" fill="#c4cf08" opacity="0.62"/>
<rect x="62" y="90" width="3" height="2" fill="#c4cf08" opacity="0.62"/>
<rect x="66" y="90" width="9" height="2" fill="#c4cf08" opacity="0.62"/>
<rect x="10" y="92" width="8" height="2" fill="#ffffff" opacity="0.15"/>
<rect x="19" y="92" width="3" height="2" fill="#9a9a9a" opacity="0.19"/>
<rect x="23" y="92" width="1" height="2" fill="#ffd700" opacity="0.19"/>
<rect x="24" y="92" width="6" height="2" fill="#ffffff" opacity="0.15"/>
<rect x="31" y="92" width="4" height="2" fill="#e6c8a4" opacity="0.19"/>
<rect x="35" y="92" width="1" height="2" fill="#ffd700" opacity="0.19"/>
<rect x="36" y="92" width="1" height="2" fill="#cfcfcf" opacity="0.19"/>
<rect x="12" y="94" width="5" height="2" fill="#ffffff" opacity="0.15"/>
<rect x="17" y="94" width="1" height="2" fill="#cfcfcf" opacity="0.19"/>
<rect x="18" y="94" width="3" height="2" fill="#9a9a9a" opacity="0.19"/>
<rect x="21" y="94" width="1" height="2" fill="#ffd700" opacity="0.19"/>
<rect x="22" y="94" width="4" height="2" fill="#e6c8a4" opacity="0.19"/>
<rect x="26" y="94" width="1" height="2" fill="#ffd700" opacity="0.19"/>
<rect x="27" y="94" width="1" height="2" fill="#cfcfcf" opacity="0.19"/>
<rect x="10" y="96" width="11" height="2" fill="#ffffff" opacity="0.15"/>
<rect x="22" y="96" width="1" height="2" fill="#cfcfcf" opacity="0.19"/>
<rect x="24" y="96" width="3" height="2" fill="#d4d4d4" opacity="0.19"/>
<rect x="10" y="100" width="2" height="2" fill="#c4cf08" opacity="0.30"/>
<rect x="13" y="100" width="10" height="2" fill="#c4cf08" opacity="0.30"/>
<rect x="24" y="100" width="5" height="2" fill="#c4cf08" opacity="0.30"/>
<rect x="30" y="100" width="7" height="2" fill="#c4cf08" opacity="0.30"/>
<rect x="10" y="102" width="6" height="2" fill="#ffffff" opacity="0.31"/>
<rect x="17" y="102" width="7" height="2" fill="#ffffff" opacity="0.31"/>
<rect x="25" y="102" width="4" height="2" fill="#ffffff" opacity="0.31"/>
<rect x="30" y="102" width="9" height="2" fill="#9a9a9a" opacity="0.38"/>
<rect x="39" y="102" width="1" height="2" fill="#ffd700" opacity="0.38"/>
<rect x="40" y="102" width="9" height="2" fill="#e0524f" opacity="0.38"/>
<rect x="50" y="102" width="5" height="2" fill="#e6c8a4" opacity="0.38"/>
<rect x="55" y="102" width="1" height="2" fill="#ffd700" opacity="0.38"/>
<rect x="56" y="102" width="1" height="2" fill="#cfcfcf" opacity="0.38"/>
<rect x="10" y="104" width="6" height="2" fill="#ffffff" opacity="0.31"/>
<rect x="17" y="104" width="7" height="2" fill="#ffffff" opacity="0.31"/>
<rect x="25" y="104" width="8" height="2" fill="#ffffff" opacity="0.31"/>
<rect x="34" y="104" width="4" height="2" fill="#ffffff" opacity="0.31"/>
<rect x="39" y="104" width="13" height="2" fill="#9a9a9a" opacity="0.38"/>
<rect x="52" y="104" width="1" height="2" fill="#ffd700" opacity="0.38"/>
<rect x="53" y="104" width="9" height="2" fill="#e0524f" opacity="0.38"/>
<rect x="63" y="104" width="5" height="2" fill="#e6c8a4" opacity="0.38"/>
<rect x="68" y="104" width="1" height="2" fill="#ffd700" opacity="0.38"/>
<rect x="69" y="104" width="1" height="2" fill="#cfcfcf" opacity="0.38"/>
<rect x="10" y="106" width="6" height="2" fill="#ffffff" opacity="0.31"/>
<rect x="17" y="106" width="7" height="2" fill="#ffffff" opacity="0.31"/>
<rect x="25" y="106" width="9" height="2" fill="#ffffff" opacity="0.31"/>
<rect x="35" y="106" width="4" height="2" fill="#ffffff" opacity="0.31"/>
<rect x="40" y="106" width="13" height="2" fill="#9a9a9a" opacity="0.38"/>
<rect x="53" y="106" width="2" height="2" fill="#ffd700" opacity="0.38"/>
<rect x="55" y="106" width="1" height="2" fill="#cfcfcf" opacity="0.38"/>
<rect x="10" y="108" width="6" height="2" fill="#ffffff" opacity="0.31"/>
<rect x="17" y="108" width="7" height="2" fill="#ffffff" opacity="0.31"/>
<rect x="25" y="108" width="9" height="2" fill="#ffffff" opacity="0.31"/>
<rect x="35" y="108" width="4" height="2" fill="#ffffff" opacity="0.31"/>
<rect x="40" y="108" width="13" height="2" fill="#9a9a9a" opacity="0.38"/>
<rect x="53" y="108" width="2" height="2" fill="#ffd700" opacity="0.38"/>
<rect x="55" y="108" width="1" height="2" fill="#cfcfcf" opacity="0.38"/>
<rect x="10" y="110" width="6" height="2" fill="#ffffff" opacity="0.31"/>
<rect x="17" y="110" width="7" height="2" fill="#ffffff" opacity="0.31"/>
<rect x="25" y="110" width="9" height="2" fill="#ffffff" opacity="0.31"/>
<rect x="35" y="110" width="4" height="2" fill="#ffffff" opacity="0.31"/>
<rect x="40" y="110" width="14" height="2" fill="#9a9a9a" opacity="0.38"/>
<rect x="54" y="110" width="1" height="2" fill="#ffd700" opacity="0.38"/>
<rect x="55" y="110" width="12" height="2" fill="#e0524f" opacity="0.38"/>
<rect x="68" y="110" width="8" height="2" fill="#e6c8a4" opacity="0.38"/>
<rect x="76" y="110" width="1" height="2" fill="#ffd700" opacity="0.38"/>
<rect x="77" y="110" width="1" height="2" fill="#cfcfcf" opacity="0.38"/>
<rect x="10" y="112" width="6" height="2" fill="#ffffff" opacity="0.31"/>
<rect x="17" y="112" width="7" height="2" fill="#ffffff" opacity="0.31"/>
<rect x="25" y="112" width="8" height="2" fill="#ffffff" opacity="0.31"/>
<rect x="34" y="112" width="4" height="2" fill="#ffffff" opacity="0.31"/>
<rect x="39" y="112" width="6" height="2" fill="#9a9a9a" opacity="0.38"/>
<rect x="45" y="112" width="2" height="2" fill="#ffd700" opacity="0.38"/>
<rect x="47" y="112" width="1" height="2" fill="#cfcfcf" opacity="0.38"/>
<rect x="8" y="116" width="8" height="2" fill="#ffffff" opacity="0.31"/>
<rect x="17" y="116" width="1" height="2" fill="#cfcfcf" opacity="0.38"/>
<rect x="19" y="116" width="17" height="2" fill="#d4d4d4" opacity="0.38"/>
<rect x="8" y="120" width="2" height="2" fill="#c4cf08" opacity="0.62"/>
<rect x="10" y="120" width="3" height="2" fill="#c4cf08" opacity="0.62"/>
<rect x="14" y="120" width="13" height="2" fill="#c4cf08" opacity="0.62"/>
<rect x="8" y="122" width="8" height="2" fill="#ffffff" opacity="0.15"/>
<rect x="17" y="122" width="4" height="2" fill="#ffffff" opacity="0.15"/>
<rect x="22" y="122" width="17" height="2" fill="#e0524f" opacity="0.19"/>
<rect x="39" y="122" width="2" height="2" fill="#cfcfcf" opacity="0.19"/>
<rect x="41" y="122" width="13" height="2" fill="#c4c4c4" opacity="0.19"/>
<rect x="54" y="122" width="1" height="2" fill="#ffd700" opacity="0.19"/>
<rect x="55" y="122" width="9" height="2" fill="#e0524f" opacity="0.19"/>
<rect x="65" y="122" width="5" height="2" fill="#e6c8a4" opacity="0.19"/>
<rect x="70" y="122" width="1" height="2" fill="#ffd700" opacity="0.19"/>
<rect x="71" y="122" width="1" height="2" fill="#cfcfcf" opacity="0.19"/>
<rect x="10" y="124" width="5" height="2" fill="#ffffff" opacity="0.15"/>
<rect x="15" y="124" width="1" height="2" fill="#cfcfcf" opacity="0.19"/>
<rect x="16" y="124" width="13" height="2" fill="#c4c4c4" opacity="0.19"/>
<rect x="29" y="124" width="1" height="2" fill="#ffd700" opacity="0.19"/>
<rect x="30" y="124" width="5" height="2" fill="#e6c8a4" opacity="0.19"/>
<rect x="35" y="124" width="1" height="2" fill="#ffd700" opacity="0.19"/>
<rect x="36" y="124" width="1" height="2" fill="#cfcfcf" opacity="0.19"/>
<rect x="10" y="126" width="2" height="2" fill="#ffffff" opacity="0.15"/>
<rect x="13" y="126" width="1" height="2" fill="#ffd700" opacity="0.19"/>
<rect x="14" y="126" width="1" height="2" fill="#cfcfcf" opacity="0.19"/>
<rect x="15" y="126" width="13" height="2" fill="#e0524f" opacity="0.19"/>
<rect x="28" y="126" width="1" height="2" fill="#cfcfcf" opacity="0.19"/>
<rect x="29" y="126" width="1" height="2" fill="#da70d6" opacity="0.19"/>
<rect x="30" y="126" width="7" height="2" fill="#ffffff" opacity="0.15"/>
<rect x="38" y="126" width="6" height="2" fill="#e0524f" opacity="0.19"/>
<rect x="44" y="126" width="1" height="2" fill="#da70d6" opacity="0.19"/>
<rect x="45" y="126" width="2" height="2" fill="#cfcfcf" opacity="0.19"/>
<rect x="47" y="126" width="3" height="2" fill="#d4d4d4" opacity="0.19"/>
<rect x="50" y="126" width="1" height="2" fill="#da70d6" opacity="0.19"/>
<rect x="51" y="126" width="4" height="2" fill="#ffffff" opacity="0.15"/>
<rect x="55" y="126" width="1" height="2" fill="#cfcfcf" opacity="0.19"/>
<rect x="57" y="126" width="2" height="2" fill="#e4dca0" opacity="0.19"/>
<rect x="59" y="126" width="1" height="2" fill="#cfcfcf" opacity="0.19"/>
<rect x="61" y="126" width="5" height="2" fill="#e4dca0" opacity="0.19"/>
<rect x="66" y="126" width="1" height="2" fill="#cfcfcf" opacity="0.19"/>
<rect x="68" y="126" width="3" height="2" fill="#c6d2e0" opacity="0.19"/>
<rect x="71" y="126" width="1" height="2" fill="#da70d6" opacity="0.19"/>
<rect x="72" y="126" width="1" height="2" fill="#ffd700" opacity="0.19"/>
<rect x="11" y="128" width="10" height="2" fill="#f0cfa8" opacity="0.19"/>
<rect x="21" y="128" width="1" height="2" fill="#ffd700" opacity="0.19"/>
<rect x="22" y="128" width="7" height="2" fill="#eab42c" opacity="0.19"/>
<rect x="29" y="128" width="1" height="2" fill="#cfcfcf" opacity="0.19"/>
<rect x="30" y="128" width="1" height="2" fill="#da70d6" opacity="0.19"/>
<rect x="31" y="128" width="8" height="2" fill="#eab42c" opacity="0.19"/>
<rect x="40" y="128" width="9" height="2" fill="#eab42c" opacity="0.19"/>
<rect x="50" y="128" width="4" height="2" fill="#eab42c" opacity="0.19"/>
<rect x="55" y="128" width="2" height="2" fill="#eab42c" opacity="0.19"/>
<rect x="58" y="128" width="3" height="2" fill="#eab42c" opacity="0.19"/>
<rect x="62" y="128" width="4" height="2" fill="#eab42c" opacity="0.19"/>
<rect x="67" y="128" width="1" height="2" fill="#eab42c" opacity="0.19"/>
<rect x="68" y="128" width="14" height="2" fill="#cfcfcf" opacity="0.19"/>
<rect x="82" y="128" width="2" height="2" fill="#179fff" opacity="0.19"/>
<rect x="84" y="128" width="1" height="2" fill="#cfcfcf" opacity="0.19"/>
<rect x="85" y="128" width="6" height="2" fill="#eab42c" opacity="0.19"/>
<rect x="91" y="128" width="1" height="2" fill="#da70d6" opacity="0.19"/>
<rect x="92" y="128" width="1" height="2" fill="#ffd700" opacity="0.19"/>
<rect x="8" y="130" width="11" height="2" fill="#ffffff" opacity="0.15"/>
<rect x="20" y="130" width="1" height="2" fill="#cfcfcf" opacity="0.19"/>
<rect x="22" y="130" width="13" height="2" fill="#d4d4d4" opacity="0.19"/>
<rect x="10" y="134" width="2" height="2" fill="#c4cf08" opacity="0.62"/>
<rect x="13" y="134" width="3" height="2" fill="#c4cf08" opacity="0.62"/>
<rect x="17" y="134" width="5" height="2" fill="#c4cf08" opacity="0.62"/>
<rect x="23" y="134" width="5" height="2" fill="#c4cf08" opacity="0.62"/>
<rect x="10" y="136" width="4" height="2" fill="#ffffff" opacity="0.15"/>
<rect x="15" y="136" width="17" height="2" fill="#e0524f" opacity="0.19"/>
<rect x="32" y="136" width="2" height="2" fill="#cfcfcf" opacity="0.19"/>
<rect x="34" y="136" width="9" height="2" fill="#c4c4c4" opacity="0.19"/>
<rect x="43" y="136" width="1" height="2" fill="#ffd700" opacity="0.19"/>
<rect x="44" y="136" width="9" height="2" fill="#e0524f" opacity="0.19"/>
<rect x="54" y="136" width="5" height="2" fill="#e6c8a4" opacity="0.19"/>
<rect x="59" y="136" width="1" height="2" fill="#ffd700" opacity="0.19"/>
<rect x="60" y="136" width="1" height="2" fill="#cfcfcf" opacity="0.19"/>
<rect x="12" y="138" width="4" height="2" fill="#ffffff" opacity="0.15"/>
<rect x="14" y="140" width="13" height="2" fill="#c4c4c4" opacity="0.19"/>
<rect x="27" y="140" width="2" height="2" fill="#ffd700" opacity="0.19"/>
<rect x="29" y="140" width="1" height="2" fill="#cfcfcf" opacity="0.19"/>
<rect x="14" y="142" width="13" height="2" fill="#c4c4c4" opacity="0.19"/>
<rect x="27" y="142" width="2" height="2" fill="#ffd700" opacity="0.19"/>
<rect x="29" y="142" width="1" height="2" fill="#cfcfcf" opacity="0.19"/>
<rect x="12" y="144" width="4" height="2" fill="#ffffff" opacity="0.15"/>
<rect x="10" y="146" width="7" height="2" fill="#ffffff" opacity="0.31"/>
<rect x="18" y="146" width="1" height="2" fill="#cfcfcf" opacity="0.38"/>
<rect x="20" y="146" width="9" height="2" fill="#d4d4d4" opacity="0.38"/>
<rect x="10" y="150" width="5" height="2" fill="#c4cf08" opacity="0.62"/>
<rect x="16" y="150" width="6" height="2" fill="#c4cf08" opacity="0.62"/>
<rect x="23" y="150" width="6" height="2" fill="#c4cf08" opacity="0.62"/>
<rect x="30" y="150" width="4" height="2" fill="#c4cf08" opacity="0.62"/>
<rect x="35" y="150" width="5" height="2" fill="#c4cf08" opacity="0.62"/>
<rect x="41" y="150" width="3" height="2" fill="#c4cf08" opacity="0.62"/>
<rect x="45" y="150" width="6" height="2" fill="#c4cf08" opacity="0.62"/>
<rect x="52" y="150" width="4" height="2" fill="#c4cf08" opacity="0.62"/>
<rect x="57" y="150" width="5" height="2" fill="#c4cf08" opacity="0.62"/>
<rect x="63" y="150" width="5" height="2" fill="#c4cf08" opacity="0.62"/>
<rect x="69" y="150" width="6" height="2" fill="#c4cf08" opacity="0.62"/>
<rect x="8" y="152" width="4" height="2" fill="#ffffff" opacity="0.31"/>
<rect x="13" y="152" width="17" height="2" fill="#e0524f" opacity="0.31"/>
<rect x="30" y="152" width="16" height="2" fill="#bdbdbd" opacity="0.31"/>
<rect x="10" y="154" width="7" height="2" fill="#ffffff" opacity="0.31"/>
<rect x="12" y="156" width="26" height="2" fill="#bdbdbd" opacity="0.25"/>
<rect x="12" y="158" width="16" height="2" fill="#bdbdbd" opacity="0.25"/>
<rect x="12" y="160" width="36" height="2" fill="#bdbdbd" opacity="0.25"/>
<rect x="14" y="162" width="32" height="2" fill="#9cc4e4" opacity="0.37"/>
<rect x="14" y="164" width="6" height="2" fill="#c4cf08" opacity="0.62"/>
<rect x="21" y="164" width="6" height="2" fill="#c4cf08" opacity="0.62"/>
<rect x="28" y="164" width="3" height="2" fill="#c4cf08" opacity="0.62"/>
<rect x="14" y="166" width="19" height="2" fill="#9cc4e4" opacity="0.50"/>
<rect x="14" y="168" width="4" height="2" fill="#c4cf08" opacity="0.62"/>
<rect x="19" y="168" width="8" height="2" fill="#c4cf08" opacity="0.62"/>
<rect x="28" y="168" width="7" height="2" fill="#c4cf08" opacity="0.62"/>
<rect x="36" y="168" width="3" height="2" fill="#c4cf08" opacity="0.62"/>
<rect x="40" y="168" width="5" height="2" fill="#c4cf08" opacity="0.62"/>
<rect x="46" y="168" width="4" height="2" fill="#c4cf08" opacity="0.62"/>
<rect x="51" y="168" width="4" height="2" fill="#c4cf08" opacity="0.62"/>
<rect x="14" y="170" width="26" height="2" fill="#9cc4e4" opacity="0.50"/>
<rect x="12" y="172" width="3" height="2" fill="#ffffff" opacity="0.38"/>
<rect x="10" y="174" width="7" height="2" fill="#ffffff" opacity="0.38"/>
<rect x="18" y="174" width="1" height="2" fill="#bdbdbd" opacity="0.38"/>
<rect x="20" y="174" width="13" height="2" fill="#bdbdbd" opacity="0.38"/>
<rect x="10" y="180" width="3" height="2" fill="#c4cf08" opacity="0.62"/>
<rect x="14" y="180" width="7" height="2" fill="#c4cf08" opacity="0.62"/>
<rect x="22" y="180" width="4" height="2" fill="#c4cf08" opacity="0.62"/>
<rect x="27" y="180" width="8" height="2" fill="#c4cf08" opacity="0.62"/>
<rect x="36" y="180" width="1" height="2" fill="#c4cf08" opacity="0.62"/>
<rect x="8" y="182" width="4" height="2" fill="#ffffff" opacity="0.31"/>
<rect x="13" y="182" width="17" height="2" fill="#e0524f" opacity="0.31"/>
<rect x="30" y="182" width="18" height="2" fill="#bdbdbd" opacity="0.31"/>
<rect x="10" y="184" width="7" height="2" fill="#ffffff" opacity="0.25"/>
<rect x="12" y="186" width="26" height="2" fill="#9cc4e4" opacity="0.25"/>
<rect x="12" y="188" width="22" height="2" fill="#9cc4e4" opacity="0.25"/>
<rect x="14" y="190" width="24" height="2" fill="#9cc4e4" opacity="0.25"/>
<rect x="14" y="192" width="22" height="2" fill="#9cc4e4" opacity="0.37"/>
<rect x="12" y="194" width="3" height="2" fill="#ffffff" opacity="0.38"/>
<rect x="10" y="196" width="7" height="2" fill="#ffffff" opacity="0.38"/>
<rect x="18" y="196" width="1" height="2" fill="#bdbdbd" opacity="0.38"/>
<rect x="20" y="196" width="13" height="2" fill="#bdbdbd" opacity="0.38"/>
<rect x="10" y="200" width="7" height="2" fill="#c4cf08" opacity="0.62"/>
<rect x="18" y="200" width="4" height="2" fill="#c4cf08" opacity="0.62"/>
<rect x="23" y="200" width="7" height="2" fill="#c4cf08" opacity="0.62"/>
<rect x="31" y="200" width="5" height="2" fill="#c4cf08" opacity="0.62"/>
<rect x="37" y="200" width="6" height="2" fill="#c4cf08" opacity="0.62"/>
<rect x="44" y="200" width="3" height="2" fill="#c4cf08" opacity="0.62"/>
<rect x="48" y="200" width="6" height="2" fill="#c4cf08" opacity="0.62"/>
<rect x="8" y="202" width="4" height="2" fill="#ffffff" opacity="0.31"/>
<rect x="13" y="202" width="17" height="2" fill="#e0524f" opacity="0.31"/>
<rect x="30" y="202" width="16" height="2" fill="#bdbdbd" opacity="0.31"/>
<rect x="47" y="202" width="12" height="2" fill="#e0524f" opacity="0.31"/>
<rect x="60" y="202" width="10" height="2" fill="#e8a23c" opacity="0.31"/>
<rect x="10" y="204" width="28" height="2" fill="#bdbdbd" opacity="0.25"/>
<rect x="12" y="206" width="32" height="2" fill="#9cc4e4" opacity="0.25"/>
<rect x="16" y="208" width="32" height="2" fill="#9cc4e4" opacity="0.25"/>
<rect x="16" y="210" width="30" height="2" fill="#9cc4e4" opacity="0.25"/>
<rect x="16" y="212" width="14" height="2" fill="#9cc4e4" opacity="0.31"/>
<rect x="31" y="212" width="2" height="2" fill="#bdbdbd" opacity="0.31"/>
<rect x="34" y="212" width="14" height="2" fill="#e8a23c" opacity="0.31"/>
<rect x="16" y="214" width="14" height="2" fill="#9cc4e4" opacity="0.37"/>
<rect x="31" y="214" width="2" height="2" fill="#bdbdbd" opacity="0.37"/>
<rect x="34" y="214" width="17" height="2" fill="#e8a23c" opacity="0.37"/>
<rect x="16" y="216" width="14" height="2" fill="#9cc4e4" opacity="0.38"/>
<rect x="31" y="216" width="2" height="2" fill="#bdbdbd" opacity="0.38"/>
<rect x="34" y="216" width="8" height="2" fill="#e8a23c" opacity="0.38"/>
<rect x="42" y="216" width="10" height="2" fill="#9cc4e4" opacity="0.38"/>
<rect x="12" y="220" width="9" height="2" fill="#ffffff" opacity="0.38"/>
<rect x="22" y="220" width="13" height="2" fill="#9cc4e4" opacity="0.38"/>
<rect x="36" y="220" width="3" height="2" fill="#ffffff" opacity="0.38"/>
<rect x="40" y="220" width="14" height="2" fill="#9cc4e4" opacity="0.38"/>
<rect x="55" y="220" width="2" height="2" fill="#bdbdbd" opacity="0.38"/>
<rect x="58" y="220" width="4" height="2" fill="#bdbdbd" opacity="0.38"/>
<rect x="16" y="222" width="14" height="2" fill="#e8a23c" opacity="0.38"/>
<rect x="31" y="222" width="2" height="2" fill="#bdbdbd" opacity="0.38"/>
<rect x="34" y="222" width="14" height="2" fill="#e8a23c" opacity="0.38"/>
<rect x="18" y="224" width="14" height="2" fill="#9cc4e4" opacity="0.38"/>
<rect x="33" y="224" width="2" height="2" fill="#bdbdbd" opacity="0.38"/>
<rect x="36" y="224" width="15" height="2" fill="#e8a23c" opacity="0.38"/>
<rect x="16" y="226" width="14" height="2" fill="#9cc4e4" opacity="0.38"/>
<rect x="31" y="226" width="2" height="2" fill="#bdbdbd" opacity="0.38"/>
<rect x="34" y="226" width="6" height="2" fill="#e8a23c" opacity="0.38"/>
<rect x="12" y="228" width="3" height="2" fill="#9cc4e4" opacity="0.38"/>
<rect x="16" y="228" width="6" height="2" fill="#9cc4e4" opacity="0.38"/>
<rect x="13" y="230" width="9" height="2" fill="#e8a23c" opacity="0.50"/>
<rect x="23" y="230" width="15" height="2" fill="#bdbdbd" opacity="0.38"/>
<rect x="39" y="230" width="9" height="2" fill="#e8a23c" opacity="0.38"/>
<rect x="48" y="230" width="7" height="2" fill="#e8a23c" opacity="0.38"/>
<rect x="56" y="230" width="3" height="2" fill="#c4cf08" opacity="0.62"/>
<rect x="60" y="230" width="3" height="2" fill="#e8a23c" opacity="0.38"/>
<rect x="64" y="230" width="4" height="2" fill="#e8a23c" opacity="0.38"/>
<rect x="69" y="230" width="1" height="2" fill="#bdbdbd" opacity="0.38"/>
<rect x="71" y="230" width="11" height="2" fill="#bdbdbd" opacity="0.38"/>
<rect x="14" y="232" width="8" height="2" fill="#ffffff" opacity="0.38"/>
<rect x="10" y="234" width="7" height="2" fill="#ffffff" opacity="0.38"/>
<rect x="18" y="234" width="1" height="2" fill="#bdbdbd" opacity="0.38"/>
<rect x="20" y="234" width="14" height="2" fill="#bdbdbd" opacity="0.38"/>
<rect x="10" y="238" width="7" height="2" fill="#c4cf08" opacity="0.62"/>
<rect x="18" y="238" width="4" height="2" fill="#c4cf08" opacity="0.62"/>
<rect x="23" y="238" width="4" height="2" fill="#c4cf08" opacity="0.62"/>
<rect x="28" y="238" width="3" height="2" fill="#c4cf08" opacity="0.62"/>
<rect x="8" y="240" width="8" height="2" fill="#ffffff" opacity="0.25"/>
<rect x="17" y="240" width="4" height="2" fill="#ffffff" opacity="0.25"/>
<rect x="22" y="240" width="17" height="2" fill="#e0524f" opacity="0.25"/>
<rect x="39" y="240" width="12" height="2" fill="#bdbdbd" opacity="0.25"/>
<rect x="10" y="242" width="38" height="2" fill="#e8a23c" opacity="0.19"/>
<rect x="12" y="244" width="46" height="2" fill="#e8a23c" opacity="0.19"/>
<rect x="10" y="246" width="18" height="2" fill="#bdbdbd" opacity="0.19"/>
<rect x="9" y="252" width="6" height="2" fill="#8a8a8a" opacity="0.37"/>
<rect x="16" y="252" width="2" height="2" fill="#c4cf08" opacity="0.50"/>
<rect x="19" y="252" width="19" height="2" fill="#c4cf08" opacity="0.50"/>
</g>
<rect x="0" y="92" width="120" height="1" fill="#ffffff" opacity="0.045"/>
<rect x="0" y="152" width="120" height="1" fill="#ffffff" opacity="0.045"/>
<g font-family="Liberation Sans, sans-serif" font-size="9.3" fill="#1e1e1e" stroke="#1e1e1e" stroke-width="2.2" stroke-opacity="0.8" stroke-linejoin="round">
<text x="8" y="61.0" textLength="100" lengthAdjust="spacing">AHB_MAS…IVER_SV</text>
<text x="8" y="79.0" textLength="104" lengthAdjust="spacing">ahb_maste…ansfer);</text>
<text x="8" y="101.0" textLength="95" lengthAdjust="spacing">new (string name);</text>
<text x="8" y="131.0" textLength="99" lengthAdjust="spacing">void ahb_… phase);</text>
<text x="8" y="145.0" textLength="104" lengthAdjust="spacing">ahb_maste… phase);</text>
<text x="8" y="161.0" textLength="108" lengthAdjust="spacing">ahb_maste…_drive();</text>
<text x="8" y="191.0" textLength="107" lengthAdjust="spacing">ahb_maste…ignals();</text>
<text x="8" y="211.0" textLength="109" lengthAdjust="spacing">ahb_maste…ransfer);</text>
<text x="8" y="249.0" textLength="103" lengthAdjust="spacing">void ahb_…report();</text>
</g>
<g font-family="Liberation Sans, sans-serif" font-size="9.3" fill="#d4d4d4" stroke="#d4d4d4" stroke-width="0.08" text-rendering="geometricPrecision">
<text x="8" y="61.0" textLength="100" lengthAdjust="spacing">AHB_MAS…IVER_SV</text>
<text x="8" y="79.0" textLength="104" lengthAdjust="spacing">ahb_maste…ansfer);</text>
<text x="8" y="101.0" textLength="95" lengthAdjust="spacing">new (string name);</text>
<text x="8" y="131.0" textLength="99" lengthAdjust="spacing">void ahb_… phase);</text>
<text x="8" y="145.0" textLength="104" lengthAdjust="spacing">ahb_maste… phase);</text>
<text x="8" y="161.0" textLength="108" lengthAdjust="spacing">ahb_maste…_drive();</text>
<text x="8" y="191.0" textLength="107" lengthAdjust="spacing">ahb_maste…ignals();</text>
<text x="8" y="211.0" textLength="109" lengthAdjust="spacing">ahb_maste…ransfer);</text>
<text x="8" y="249.0" textLength="103" lengthAdjust="spacing">void ahb_…report();</text>
</g>
</svg>
<div id="sb"></div>
<div id="slider"></div>
<div class="abs" style="left:1860px;top:284px;width:5px;height:14px;background:#9c9c9c"></div>
<div class="abs" style="left:1856px;top:288px;width:11px;height:2px;background:#a4a4a4"></div>
<div class="abs" style="left:1865px;top:290px;width:2px;height:4px;background:#e8361a"></div>
<div class="abs" style="left:1860px;top:455px;width:5px;height:6px;background:#9c9c9c"></div>
<svg class="abs" style="left:151px;top:416px" width="26" height="4" viewBox="0 0 26 4"><path d="M0 3 L1.5 1 L4.5 3 L7.5 1 L10.5 3 L13.5 1 L16.5 3 L19.5 1 L22.5 3 L25.5 1" fill="none" stroke="#ea3c36" stroke-width="1.3"/></svg>
<svg class="abs" style="left:378px;top:567px" width="10" height="19" viewBox="0 0 10 19"><path d="M1 1h7v3h-2v11h2v3h-7v-3h2v-11h-2z" fill="#fff"/><path d="M2 2.5h5M2 16.5h5M4.5 2.5v14" stroke="#222" stroke-width="1" fill="none"/></svg>
</body></html>
